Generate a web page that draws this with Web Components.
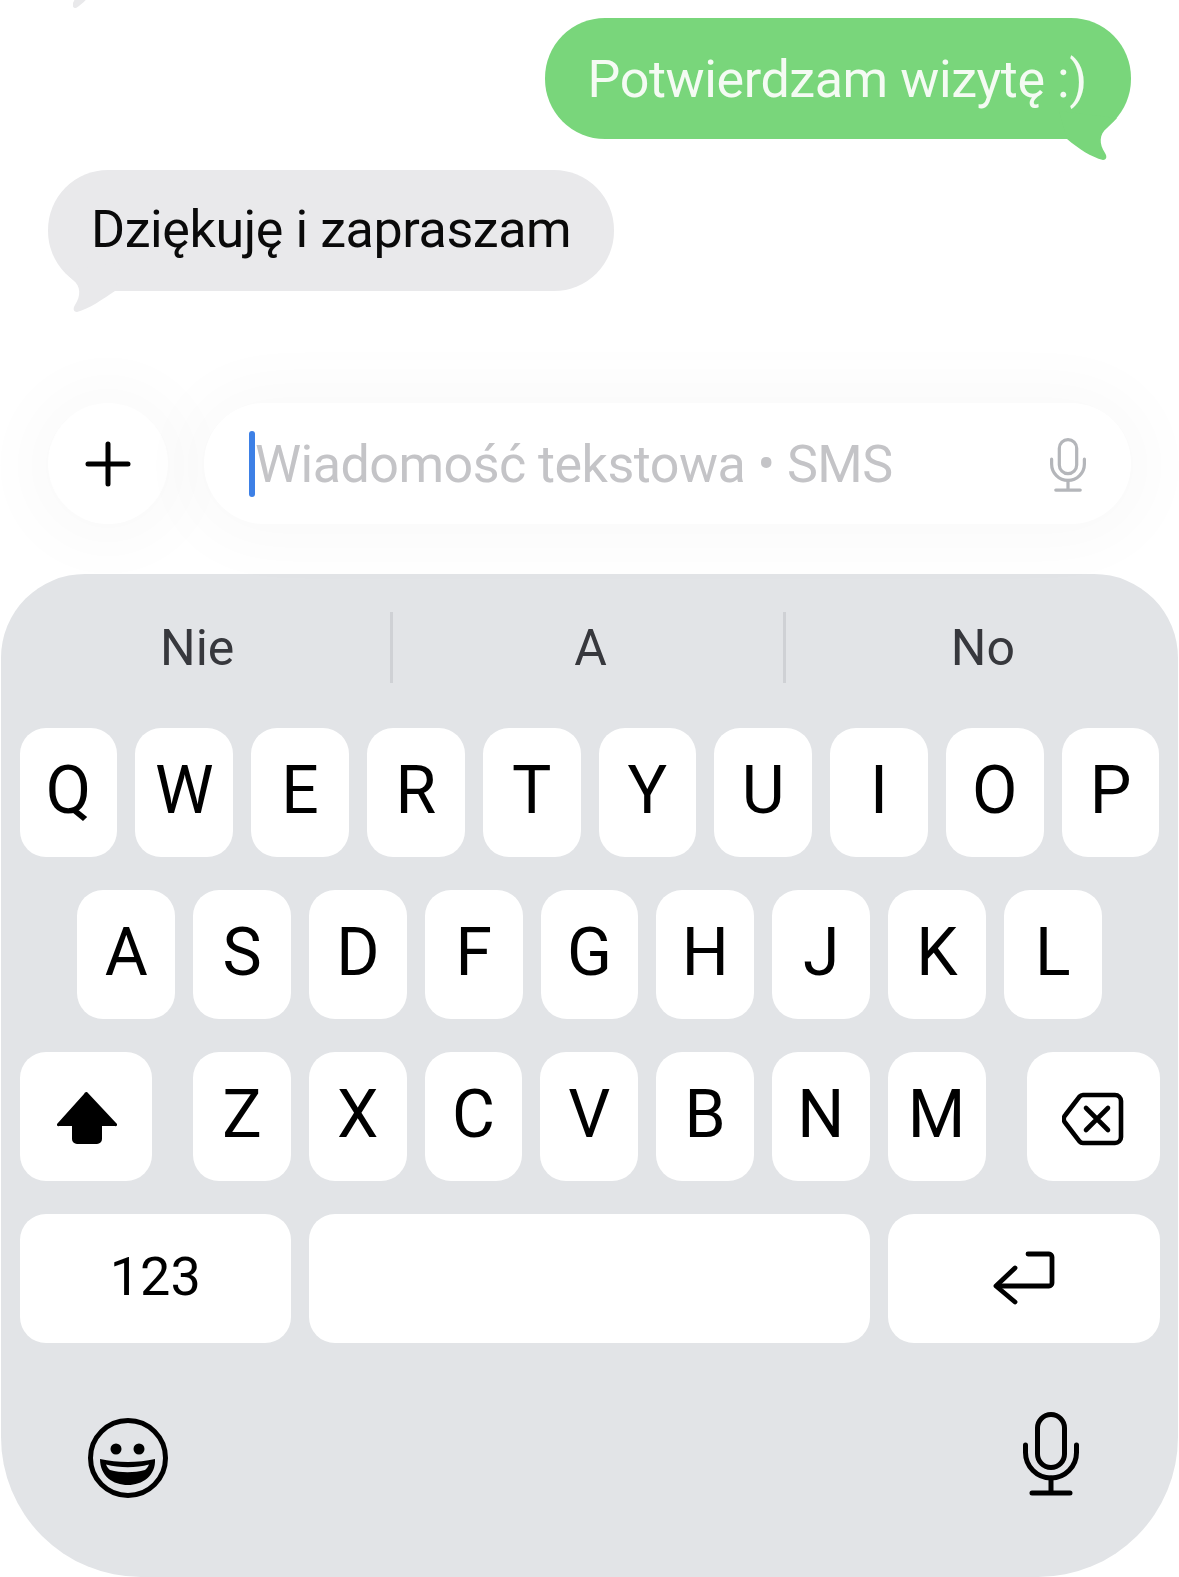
<!DOCTYPE html>
<html lang="pl">
<head>
<meta charset="utf-8">
<title>Wiadomości</title>
<style>
  html, body { margin: 0; background: #fff; }
  body { width: 1179px; height: 1577px; overflow: hidden; font-family: Roboto, "Liberation Sans", sans-serif; }
</style>
</head>
<body>
<chat-thread>
  <chat-bubble side="out">Potwierdzam wizytę :)</chat-bubble>
  <chat-bubble side="in">Dziękuję i zapraszam</chat-bubble>
</chat-thread>
<msg-composer placeholder="Wiadomość tekstowa • SMS"></msg-composer>
<ios-keyboard></ios-keyboard>

<script>
const MIC_SVG = (w, h, color) => `
  <svg width="${w}" height="${h}" viewBox="0 0 62 84" fill="none" stroke="${color}" stroke-width="5" stroke-linecap="round">
    <rect x="17.5" y="2.5" width="27" height="53" rx="13.5"/>
    <path d="M5.500 33v7.500a25.500 25.500 0 0 0 51 0v-7.500"/>
    <path d="M31 66v15M12 81h38"/>
  </svg>`;

class ChatThread extends HTMLElement {
  constructor() {
    super();
    this.attachShadow({ mode: "open" });
    this.shadowRoot.innerHTML = `
      <style>
        :host { display: block; height: 403px; padding: 0 48px; box-sizing: border-box; }
        .old-tail { display: block; margin-left: 25px; }
        .list { display: flex; flex-direction: column; gap: 31px; margin-top: 10px; }
      </style>
      <svg class="old-tail" width="30" height="8" viewBox="0 0 30 8">
        <path d="M25 -12C18 -6 10 4 3 8C-1 8 -1 4 1 1L6 -12Z" fill="#e9e9eb"/>
      </svg>
      <div class="list"><slot></slot></div>
    `;
  }
}

class ChatBubble extends HTMLElement {
  constructor() {
    super();
    this.attachShadow({ mode: "open" });
  }

  connectedCallback() {
    const out = this.getAttribute("side") === "out";
    this.shadowRoot.innerHTML = `
      <style>
        :host {
          display: block;
          position: relative;
          align-self: ${out ? "flex-end" : "flex-start"};
          font-size: 52px;
          letter-spacing: -0.4px;
          line-height: ${out ? "123px" : "120px"};
          white-space: nowrap;
          color: ${out ? "#f4fbf3" : "#0a0a0a"};
        }
        .body {
          background: ${out ? "#79d67b" : "#e9e9eb"};
          border-radius: 60px;
          padding: ${out ? "0 44px 0 43px" : "0 43px"};
          height: 121px;
          box-sizing: border-box;
        }
        svg { position: absolute; top: 100%; margin-top: -40px; }
        .out { right: 12px; }
        .in { left: 13px; }
      </style>
      <div class="body"><slot></slot></div>
      ${out
        ? `<svg class="out" width="60" height="62" viewBox="0 0 60 62"><path d="M8 40C20 50 32 58 44 61C48 61 48 57 46 54C40 45 40 35 48 29L58 19L0 12Z" fill="#79d67b"/></svg>`
        : `<svg class="in" width="60" height="62" viewBox="0 0 60 62"><path d="M54 40C42 48 28 58 16 61C12 61 12 57 14 54C20 45 20 35 12 29L2 19L60 12Z" fill="#e9e9eb"/></svg>`}
    `;
  }
}

class MsgComposer extends HTMLElement {
  constructor() {
    super();
    this.attachShadow({ mode: "open" });
  }

  connectedCallback() {
    this.shadowRoot.innerHTML = `
      <style>
        :host { display: flex; gap: 36px; height: 121px; padding: 0 48px; }
        .plus, .field {
          background: #fff;
          box-shadow: 0 2px 64px 22px rgba(0, 0, 0, 0.022);
          height: 121px;
          display: flex;
          align-items: center;
        }
        .plus { width: 120px; border-radius: 50%; justify-content: center; flex: none; }
        .field {
          flex: 1;
          border-radius: 60px;
          padding: 0 43px 0 45px;
          position: relative;
        }
        .caret { width: 6px; height: 66px; background: #3d80e6; border-radius: 3px; flex: none; }
        .ph { font-size: 52px; letter-spacing: -0.52px; color: #c4c4c7; flex: 1; white-space: nowrap; padding-top: 1px; }
        .mic { display: flex; margin-top: 2px; }
      </style>
      <div class="plus">
        <svg width="46" height="46" viewBox="0 0 46 46" stroke="#000" stroke-width="5" stroke-linecap="round">
          <path d="M23 3v40M3 23h40"/>
        </svg>
      </div>
      <div class="field">
        <span class="caret"></span>
        <span class="ph">${this.getAttribute("placeholder")}</span>
        <span class="mic">${MIC_SVG(40, 54, "#b4b6ba")}</span>
      </div>
    `;
  }
}

class KbKey extends HTMLElement {
  constructor() {
    super();
    this.attachShadow({ mode: "open" });
    this.shadowRoot.innerHTML = `
      <style>
        :host {
          display: flex;
          align-items: center;
          justify-content: center;
          flex: 0 0 var(--w, 97.8px);
          height: 129px;
          box-sizing: border-box;
          padding: var(--pad, 0 0 4px);
          background: #fff;
          border-radius: 26px;
          font-size: 66px;
          color: #000;
        }
      </style>
      <slot></slot>
    `;
  }
}

class IosKeyboard extends HTMLElement {
  constructor() {
    super();
    this.attachShadow({ mode: "open" });
  }

  keys(letters) {
    return [...letters].map((l) => `<kb-key>${l}</kb-key>`).join("");
  }

  connectedCallback() {
    this.shadowRoot.innerHTML = `
      <style>
        :host {
          display: block;
          margin: 50px 1px 0;
          height: 1003px;
          box-sizing: border-box;
          padding: 38px 19px 0;
          background: #e2e4e7;
          border-radius: 84px 84px 140px 140px;
        }
        .suggest { display: grid; grid-template-columns: 1fr 1fr 1fr; height: 71px; margin: 0 -19px 45px; }
        .suggest span {
          position: relative;
          display: flex;
          align-items: center;
          justify-content: center;
          font-size: 50px;
          color: #37383d;
        }
        .suggest span + span { padding-left: 2px; }
        .suggest span + span::before {
          content: "";
          position: absolute;
          left: -3px;
          top: 0;
          bottom: 0;
          width: 3px;
          background: #cfd1d5;
        }
        .rows { display: flex; flex-direction: column; gap: 33px; }
        .row { display: flex; gap: 18px; justify-content: center; }
        .row.split { justify-content: flex-start; }
        .shift { --w: 132px; --pad: 3px 0 0 2px; margin-right: 23px; }
        .del { --w: 133px; --pad: 4px 0 0; margin-left: 23px; }
        .num { --w: 271.5px; font-size: 54px; }
        .space { --w: 561px; }
        .ret { --w: 271.5px; --pad: 0 0 2px; }
        .bottom { display: flex; justify-content: space-between; align-items: flex-start; padding: 69px 77px 0 66px; }
        .emoji { margin-top: 4px; }
      </style>
      <div class="suggest"><span>Nie</span><span>A</span><span>No</span></div>
      <div class="rows">
        <div class="row">${this.keys("QWERTYUIOP")}</div>
        <div class="row">${this.keys("ASDFGHJKL")}</div>
        <div class="row split">
          <kb-key class="shift">
            <svg width="60" height="52" viewBox="0 0 60 52"><path d="M30 0L60 32a1.5 1.5 0 0 1-2 2H45V47a5 5 0 0 1-5 5H20a5 5 0 0 1-5-5V34H2a1.5 1.5 0 0 1-2-2L27 2a3 3 0 0 1 3-2Z" fill="#000"/></svg>
          </kb-key>
          ${this.keys("ZXCVBNM")}
          <kb-key class="del">
            <svg width="62" height="54" viewBox="0 0 62 54" fill="none" stroke="#000" stroke-width="4.6" stroke-linecap="round" stroke-linejoin="round">
              <path d="M21 3H53a6 6 0 0 1 6 6V45a6 6 0 0 1-6 6H21a5 5 0 0 1-3.5-1.6L3.4 31a6 6 0 0 1 0-8L17.5 4.6A5 5 0 0 1 21 3Z"/>
              <path d="M24 16L46 38M46 16L24 38"/>
            </svg>
          </kb-key>
        </div>
        <div class="row">
          <kb-key class="num">123</kb-key>
          <kb-key class="space"></kb-key>
          <kb-key class="ret">
            <svg width="62" height="54" viewBox="0 0 62 54" fill="none" stroke="#000" stroke-width="4.8" stroke-linecap="round" stroke-linejoin="round">
              <path d="M35 3H56a3 3 0 0 1 3 3V32a3 3 0 0 1-3 3H4"/>
              <path d="M22 17L3 35L22 51"/>
            </svg>
          </kb-key>
        </div>
      </div>
      <div class="bottom">
        <svg class="emoji" width="84" height="84" viewBox="0 0 84 84">
          <circle cx="42" cy="42" r="37.500" fill="none" stroke="#000" stroke-width="5"/>
          <circle cx="30" cy="33" r="5.500" fill="#000"/>
          <circle cx="53" cy="33" r="5.500" fill="#000"/>
          <path d="M14 43C32 47 52 47 69 43C70 60 56 69 42 69C27 69 14 60 14 43Z" fill="#000"/>
          <path d="M20 48.500C34 52 50 52 63 48.500C62 51 60.500 53 59 54C48 57 35 57 24 54C22.500 53 21 51 20 48.500Z" fill="#e2e4e7"/>
        </svg>
        ${MIC_SVG(62, 84, "#000")}
      </div>
    `;
  }
}

customElements.define("chat-thread", ChatThread);
customElements.define("chat-bubble", ChatBubble);
customElements.define("msg-composer", MsgComposer);
customElements.define("kb-key", KbKey);
customElements.define("ios-keyboard", IosKeyboard);
</script>
</body>
</html>
